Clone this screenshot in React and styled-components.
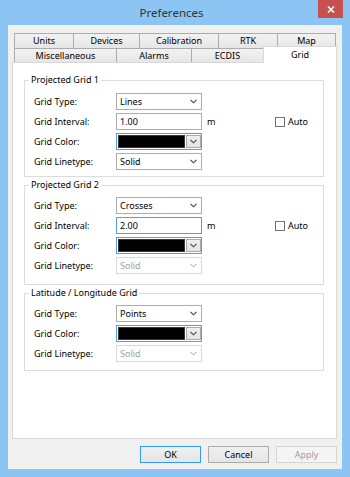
import React from 'react';
import styled, { createGlobalStyle } from 'styled-components';

const GlobalStyle = createGlobalStyle`
    html, body {
        margin: 0;
        padding: 0;
    }
    body {
        width: 350px;
        height: 477px;
        overflow: hidden;
        font-family: 'Noto Sans', 'Open Sans', sans-serif;
        font-size: 9px;
        color: #000;
    }
`;

const Window = styled.div`
    width: 350px;
    height: 477px;
    box-sizing: border-box;
    background-color: #8cc4f4;
    padding: 0 8px 8px 8px;
    display: flex;
    flex-direction: column;
`;

const TitleBar = styled.div`
    height: 25px;
    margin: 0 -8px;
    padding-right: 7px;
    display: grid;
    grid-template-columns: 1fr auto 1fr;
    align-items: start;
`;

const Title = styled.div`
    grid-column: 2;
    line-height: 26px;
    font-size: 11.5px;
    color: #333;
`;

const CloseButton = styled.div`
    grid-column: 3;
    justify-self: end;
    width: 25px;
    height: 18px;
    background-color: #c75050;
    display: flex;
    align-items: center;
    justify-content: center;
`;

const Client = styled.div`
    flex: 1;
    background-color: #f0f0f0;
    padding: 8px 5px 6px 4px;
    display: flex;
    flex-direction: column;
`;

const TabStrip = styled.div`
    padding-left: 2px;
    display: flex;
    flex-direction: column;
`;

const TabRow = styled.div`
    display: flex;
    height: ${(props) => props.$h}px;
`;

const Tab = styled.div`
    box-sizing: border-box;
    width: ${(props) => props.$w}px;
    height: 100%;
    border: 1px solid #acacac;
    border-bottom: none;
    background: linear-gradient(#f2f2f2, #e6e6e6);
    display: flex;
    align-items: center;
    justify-content: center;
    line-height: 12px;

    & + & {
        margin-left: -1px;
    }

    &.active {
        position: relative;
        z-index: 1;
        align-self: flex-start;
        height: 17px;
        margin-top: -2px;
        background: #fff;
        border-color: #d9d9d9;
        align-items: flex-start;
        padding-top: 2px;
    }
`;

const Panel = styled.div`
    box-sizing: border-box;
    height: 377px;
    border: 1px solid #d9d9d9;
    background-color: #fff;
    padding: 11px 12px 0 11px;
    display: flex;
    flex-direction: column;
    gap: 2px;
`;

const Group = styled.fieldset`
    margin: 0;
    min-width: 0;
    border: 1px solid #dcdcdc;
    padding: ${(props) => props.$pt}px 15px ${(props) => props.$pb}px 9px;
    display: flex;
    flex-direction: column;
    gap: 3px;
`;

const Legend = styled.legend`
    padding: 0 2px;
    margin-left: -5px;
    line-height: 12px;
`;

const Row = styled.div`
    display: flex;
    align-items: center;
    height: 17px;
`;

const Label = styled.div`
    width: 82px;
    flex-shrink: 0;
`;

const Combo = styled.div`
    box-sizing: border-box;
    width: 86px;
    height: 17px;
    border: 1px solid ${(props) => (props.$disabled ? '#d9d9d9' : '#abadb3')};
    background-color: #fff;
    color: ${(props) => (props.$disabled ? '#a0a0a0' : '#000')};
    padding: 0 4px 0 3px;
    display: flex;
    align-items: center;
    justify-content: space-between;
`;

const Edit = styled.div`
    box-sizing: border-box;
    width: 86px;
    height: 17px;
    border: 1px solid ${(props) => (props.$focus ? '#569de5' : '#abadb3')};
    background-color: #fff;
    padding-left: 3px;
    display: flex;
    align-items: center;
`;

const ColorCombo = styled.div`
    box-sizing: border-box;
    width: 86px;
    height: 17px;
    border: 1px solid #569de5;
    background-color: #fff;
    padding: 1px 0 1px 1px;
    display: flex;
    gap: 1px;
`;

const Swatch = styled.div`
    flex: 1;
    background-color: #000;
    border: 1px solid #3a3a3a;
`;

const DropButton = styled.div`
    box-sizing: border-box;
    width: 15px;
    border: 1px solid #acacac;
    background: linear-gradient(#f0f0f0, #e3e3e3);
    display: flex;
    align-items: center;
    justify-content: center;
`;

const Unit = styled.div`
    margin-left: 5px;
`;

const AutoCheck = styled.label`
    margin-left: auto;
    display: flex;
    align-items: center;
    gap: 3px;
`;

const CheckBox = styled.span`
    box-sizing: border-box;
    width: 10px;
    height: 10px;
    border: 1px solid #707070;
    background-color: #fff;
`;

const ButtonBar = styled.div`
    margin-top: 7px;
    display: flex;
    justify-content: flex-end;
    gap: 7px;
`;

const Button = styled.div`
    box-sizing: border-box;
    width: 61px;
    height: 17px;
    display: flex;
    align-items: center;
    justify-content: center;
    border: 1px solid ${(props) => (props.$default ? '#3399ff' : props.$disabled ? '#d5d5d5' : '#acacac')};
    background: ${(props) => (props.$disabled ? '#f4f4f4' : 'linear-gradient(#f0f0f0, #e5e5e5)')};
    color: ${(props) => (props.$disabled ? '#a0a0a0' : '#000')};
`;

const Chevron = ({ color = '#444' }) => (
    <svg width="7" height="5" viewBox="0 0 7 5">
        <polyline points="0.5,0.8 3.5,3.8 6.5,0.8" fill="none" stroke={color} strokeWidth="1.1" />
    </svg>
);

const Dropdown = ({ value, disabled }) => (
    <Combo $disabled={disabled}>
        <span>{value}</span>
        <Chevron color={disabled ? '#bdbdbd' : '#444'} />
    </Combo>
);

const ColorPicker = () => (
    <ColorCombo>
        <Swatch />
        <DropButton>
            <Chevron />
        </DropButton>
    </ColorCombo>
);

const IntervalRow = ({ value, focus }) => (
    <Row>
        <Label>Grid Interval:</Label>
        <Edit $focus={focus}>{value}</Edit>
        <Unit>m</Unit>
        <AutoCheck>
            <CheckBox />
            Auto
        </AutoCheck>
    </Row>
);

const topTabs = [
    { name: 'Units', w: 60 },
    { name: 'Devices', w: 67 },
    { name: 'Calibration', w: 80 },
    { name: 'RTK', w: 60 },
    { name: 'Map', w: 59 },
];

const bottomTabs = [
    { name: 'Miscellaneous', w: 103 },
    { name: 'Alarms', w: 76 },
    { name: 'ECDIS', w: 73 },
    { name: 'Grid', w: 74 },
];

const App = () => {
    const activeTab = 'Grid';

    return (
        <>
            <GlobalStyle />
            <Window>
                <TitleBar>
                    <Title>Preferences</Title>
                    <CloseButton>
                        <svg width="8" height="7" viewBox="0 0 8 7">
                            <path d="M1 0.5 L7 6.5 M7 0.5 L1 6.5" stroke="#fff" strokeWidth="1.6" />
                        </svg>
                    </CloseButton>
                </TitleBar>
                <Client>
                    <TabStrip>
                        <TabRow $h={15}>
                            {topTabs.map((t) => (
                                <Tab key={t.name} $w={t.w}>{t.name}</Tab>
                            ))}
                        </TabRow>
                        <TabRow $h={14}>
                            {bottomTabs.map((t) => (
                                <Tab key={t.name} $w={t.w} className={t.name === activeTab ? 'active' : ''}>
                                    {t.name}
                                </Tab>
                            ))}
                        </TabRow>
                    </TabStrip>
                    <Panel>
                        <Group $pt={7} $pb={6}>
                            <Legend>Projected Grid 1</Legend>
                            <Row>
                                <Label>Grid Type:</Label>
                                <Dropdown value="Lines" />
                            </Row>
                            <IntervalRow value="1.00" />
                            <Row>
                                <Label>Grid Color:</Label>
                                <ColorPicker />
                            </Row>
                            <Row>
                                <Label>Grid Linetype:</Label>
                                <Dropdown value="Solid" />
                            </Row>
                        </Group>
                        <Group $pt={6} $pb={10}>
                            <Legend>Projected Grid 2</Legend>
                            <Row>
                                <Label>Grid Type:</Label>
                                <Dropdown value="Crosses" />
                            </Row>
                            <IntervalRow value="2.00" focus />
                            <Row>
                                <Label>Grid Color:</Label>
                                <ColorPicker />
                            </Row>
                            <Row>
                                <Label>Grid Linetype:</Label>
                                <Dropdown value="Solid" disabled />
                            </Row>
                        </Group>
                        <Group $pt={6} $pb={8}>
                            <Legend>Latitude / Longitude Grid</Legend>
                            <Row>
                                <Label>Grid Type:</Label>
                                <Dropdown value="Points" />
                            </Row>
                            <Row>
                                <Label>Grid Color:</Label>
                                <ColorPicker />
                            </Row>
                            <Row>
                                <Label>Grid Linetype:</Label>
                                <Dropdown value="Solid" disabled />
                            </Row>
                        </Group>
                    </Panel>
                    <ButtonBar>
                        <Button $default>OK</Button>
                        <Button>Cancel</Button>
                        <Button $disabled>Apply</Button>
                    </ButtonBar>
                </Client>
            </Window>
        </>
    );
};

export default App;
